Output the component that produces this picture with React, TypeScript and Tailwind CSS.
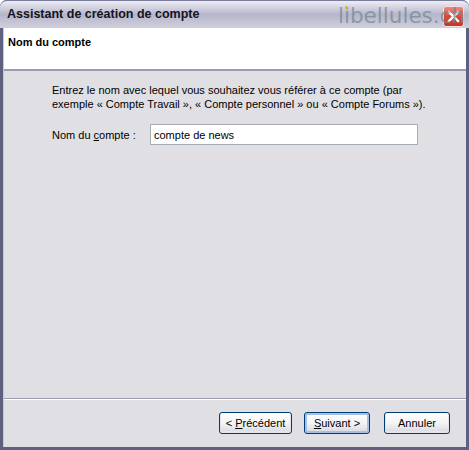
import React from "react";

const FONT = { fontFamily: '"Liberation Sans", Arial, sans-serif' };

function WizardButton({
  children,
  width,
  primary = false,
}: {
  children: React.ReactNode;
  width: string;
  primary?: boolean;
}) {
  return (
    <button
      type="button"
      className={`${width} h-[22px] rounded-[3px] border border-[#003c74] bg-gradient-to-b from-[#ffffff] via-[#f4f4f6] to-[#d6d6e0] text-[11px] text-black ${
        primary ? "shadow-[inset_0_0_0_2px_#a8c0e8]" : "shadow-[inset_0_-1px_0_1px_#e4e4ec]"
      }`}
    >
      {children}
    </button>
  );
}

export default function App() {
  return (
    <div className="relative h-[450px] w-[469px] overflow-hidden bg-white" style={FONT}>
      <div className="flex h-full flex-col rounded-t-[7px] bg-[#5f5f80]">
        {/* title bar */}
        <div className="relative flex h-[28px] shrink-0 items-center rounded-t-[7px] border-t border-[#7c7c9c] bg-gradient-to-b from-[#eeeef4] via-[#b6b6ca] to-[#cfcfdc] pl-[7px]">
          <span className="text-[12.5px] font-bold text-[#14141e]">
            Assistant de création de compte
          </span>
          <div className="absolute right-[5px] top-[5px] flex h-[21px] w-[21px] items-center justify-center rounded-[3px] border border-[#f6e0e0] bg-gradient-to-b from-[#ec8a7c] via-[#d64a3c] to-[#c03828]">
            <svg width="13" height="13" viewBox="0 0 13 13">
              <path d="M2 2 L11 11 M11 2 L2 11" stroke="#ffffff" strokeWidth="2.4" strokeLinecap="square" />
            </svg>
          </div>
          <span
            className="pointer-events-none absolute left-[338px] top-[4px] whitespace-nowrap text-[21.5px] leading-none text-[#6f8592]/70"
            style={{ fontFamily: '"DejaVu Sans", Verdana, sans-serif' }}
          >
            l<span className="relative">
              i
              <span className="absolute left-[1px] top-[3px] h-[3px] w-[3px] rounded-full bg-[#e0b020]" />
            </span>bellules.ch
          </span>
        </div>

        {/* client area */}
        <div className="flex flex-1 flex-col border-x-[3px] border-b-[3px] border-[#5f5f80]">
          <div className="flex flex-1 flex-col border-l border-[#c8c8d8] bg-[#e0dfe3]">
            <div className="h-[43px] shrink-0 border-b-2 border-[#9c9cae] bg-white pl-[4px] pt-[6px]">
              <div className="text-[11px] font-bold text-black">Nom du compte</div>
            </div>

            <div className="flex-1 whitespace-nowrap pl-[48px] pt-[12px] text-[11px] leading-[14px] text-black">
              <p>
                Entrez le nom avec lequel vous souhaitez vous référer à ce compte (par
                <br />
                exemple « Compte Travail », « Compte personnel » ou « Compte Forums »).
              </p>
              <div className="mt-[13px] flex items-center">
                <label className="w-[98px]">
                  Nom du <u>c</u>ompte :
                </label>
                <div className="flex h-[21px] w-[268px] items-center border border-[#a5acb5] bg-white pl-[3px]">
                  compte de news
                </div>
              </div>
            </div>

            <div className="flex h-[49px] shrink-0 items-center justify-end gap-[12px] border-t border-[#9c9cae] pr-[16px] shadow-[inset_0_1px_0_#ffffff]">
              <WizardButton width="w-[73px]">
                &lt; <u>P</u>récédent
              </WizardButton>
              <div className="flex gap-[14px]">
                <WizardButton width="w-[66px]" primary>
                  <u>S</u>uivant &gt;
                </WizardButton>
                <WizardButton width="w-[66px]">Annuler</WizardButton>
              </div>
            </div>
          </div>
        </div>
      </div>
    </div>
  );
}
